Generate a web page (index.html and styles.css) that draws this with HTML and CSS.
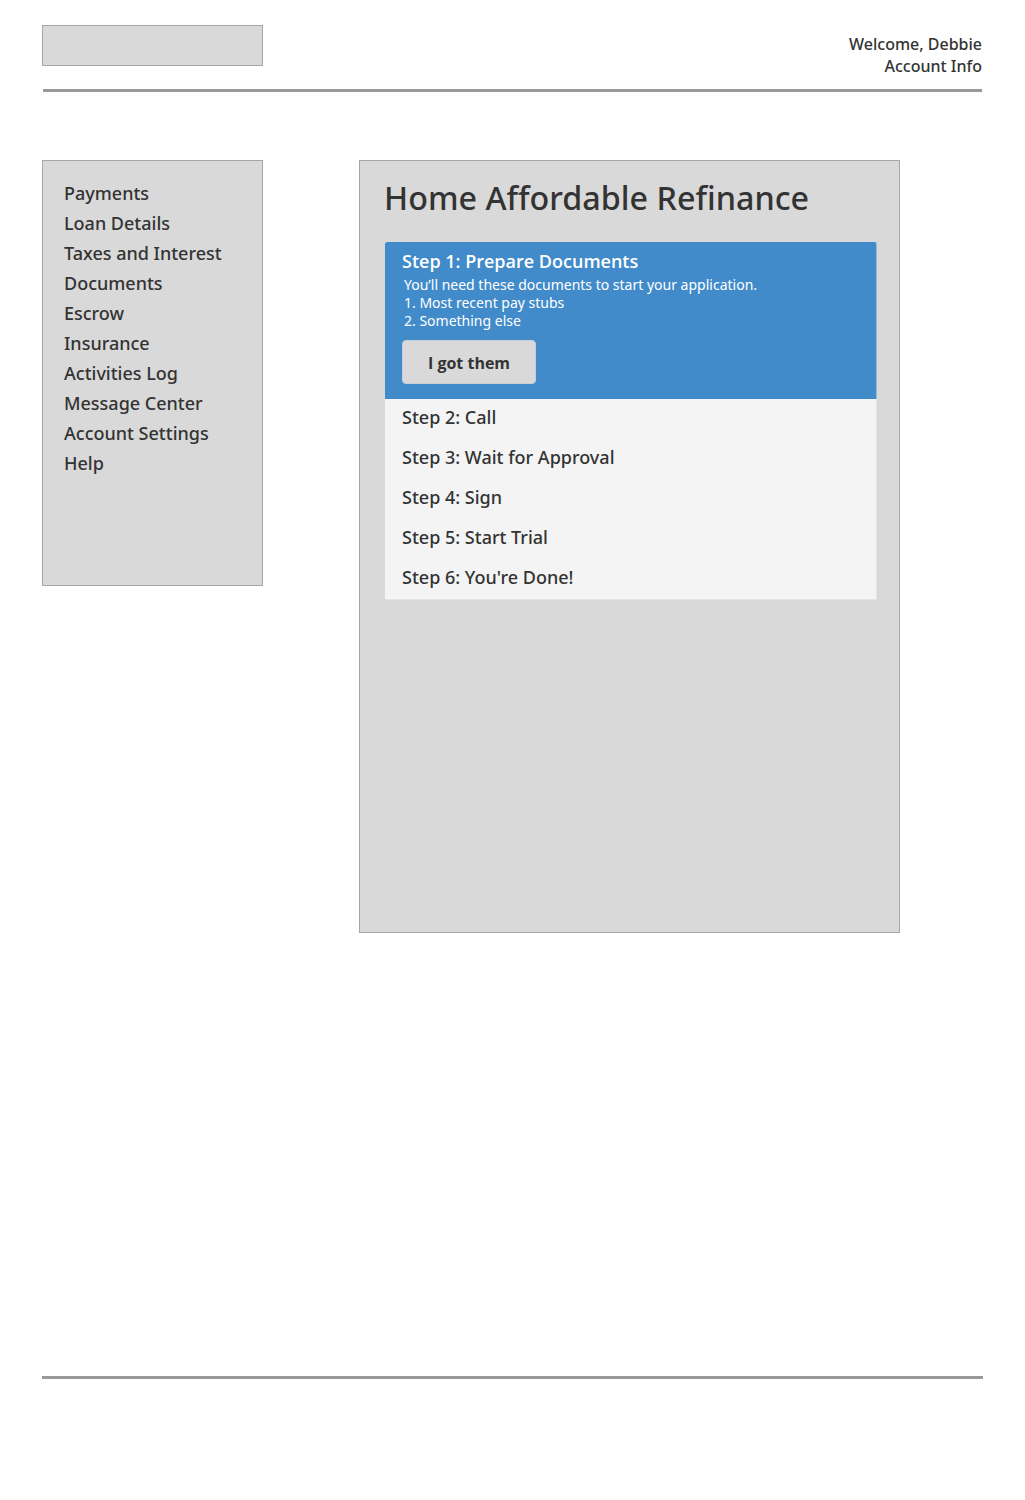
FILE: index.html
```html
<!DOCTYPE html>
<html>
<head>
<meta charset="utf-8">
<link rel="stylesheet" href="styles.css">
</head>
<body>
<div class="page">
  <header class="header">
    <div class="logo"></div>
    <div class="welcome">
      <div>Welcome, Debbie</div>
      <div>Account Info</div>
    </div>
  </header>
  <div class="rule top-rule"></div>
  <div class="content">
    <nav class="sidebar">
      <div class="nav-item">Payments</div>
      <div class="nav-item">Loan Details</div>
      <div class="nav-item">Taxes and Interest</div>
      <div class="nav-item">Documents</div>
      <div class="nav-item">Escrow</div>
      <div class="nav-item">Insurance</div>
      <div class="nav-item">Activities Log</div>
      <div class="nav-item">Message Center</div>
      <div class="nav-item">Account Settings</div>
      <div class="nav-item">Help</div>
    </nav>
    <main class="main">
      <h1 class="title">Home Affordable Refinance</h1>
      <div class="steps">
        <div class="step-active">
          <div class="step-title">Step 1: Prepare Documents</div>
          <div class="step-desc">
            <div>You’ll need these documents to start your application.</div>
            <div>1. Most recent pay stubs</div>
            <div>2. Something else</div>
          </div>
          <button class="btn">I got them</button>
        </div>
        <div class="step">Step 2: Call</div>
        <div class="step">Step 3: Wait for Approval</div>
        <div class="step">Step 4: Sign</div>
        <div class="step">Step 5: Start Trial</div>
        <div class="step">Step 6: You're Done!</div>
      </div>
    </main>
  </div>
  <div class="rule bottom-rule"></div>
</div>
</body>
</html>
```
FILE: styles.css
```css
html, body {
  margin: 0;
  padding: 0;
  background: #ffffff;
}
body {
  font-family: "Noto Sans", "Open Sans", sans-serif;
  font-weight: 500;
  color: #333333;
}
.page {
  width: 941px;
  margin-left: 42px;
}
.header {
  display: flex;
  justify-content: space-between;
  align-items: flex-start;
  height: 89px;
}
.logo {
  margin-top: 25px;
  width: 219px;
  height: 39px;
  background: #d9d9d9;
  border: 1px solid #a6a6a6;
}
.welcome {
  margin-top: 33px;
  text-align: right;
  font-size: 16px;
  line-height: 22px;
  color: #333333;
  padding-right: 1px;
}
.rule {
  height: 3px;
  background: #999999;
}
.top-rule {
  margin-left: 1px;
  width: 939px;
}
.content {
  display: flex;
  align-items: flex-start;
  gap: 96px;
  margin-top: 68px;
}
.sidebar {
  width: 219px;
  height: 407px;
  background: #d9d9d9;
  border: 1px solid #a6a6a6;
  padding-top: 17px;
  box-sizing: content-box;
}
.nav-item {
  padding-left: 21px;
  font-size: 18px;
  line-height: 30px;
  color: #333333;
}
.main {
  width: 541px;
  height: 773px;
  background: #d9d9d9;
  border: 1px solid #a6a6a6;
  padding: 0 21px 0 24px;
  box-sizing: border-box;
}
.title {
  margin: 14px 0 23px 0;
  font-size: 32.3px;
  line-height: 44px;
  font-weight: 500;
  color: #333333;
}
.steps {
  width: 492px;
  margin-left: 1px;
  background: #f4f4f4;
  border-right: 1px solid #e4e4e4;
  border-bottom: 1px solid #e4e4e4;
  box-sizing: border-box;
  border-radius: 2px;
}
.step-active {
  background: #428bca;
  color: #ffffff;
  padding: 7px 17px 14px 17px;
  height: 157px;
  box-sizing: border-box;
  border-right: 1px solid #9ab9d6;
  margin-right: -1px;
  border-radius: 2px 2px 0 0;
}
.step-title {
  font-family: "Open Sans", sans-serif;
  font-size: 18px;
  line-height: 24px;
  font-weight: 600;
}
.step-desc {
  margin-top: 3px;
  padding-left: 2px;
  font-size: 14px;
  line-height: 18px;
  font-weight: 400;
}
.btn {
  display: block;
  margin-top: 10px;
  width: 134px;
  height: 44px;
  background: #d9d9d9;
  border: 1px solid #c6ced6;
  border-radius: 4px;
  font-family: "Open Sans", sans-serif;
  font-size: 16px;
  font-weight: 700;
  color: #333333;
  padding: 2px 0 0 0;
}
.step {
  height: 40px;
  line-height: 36px;
  padding-left: 17px;
  font-size: 18px;
  color: #333333;
}
.bottom-rule {
  margin-top: 443px;
  width: 941px;
}
```
